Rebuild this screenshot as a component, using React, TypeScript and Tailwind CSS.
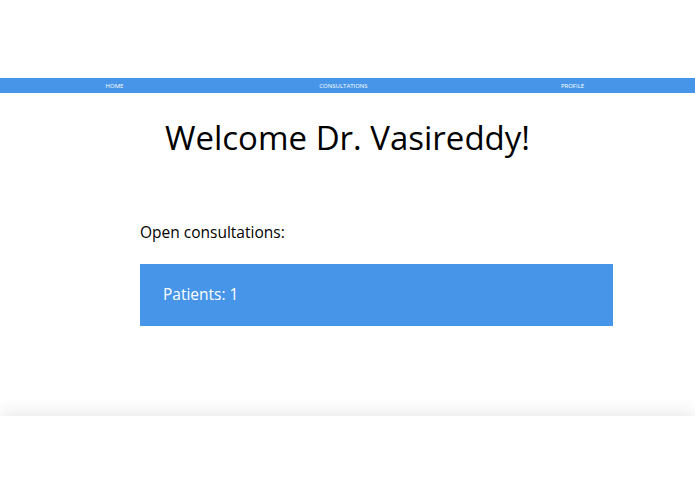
import React from "react";

export default function App() {
  return (
    <div className="w-[695px] h-[494px] bg-white overflow-hidden flex flex-col" style={{ fontFamily: '"Open Sans", sans-serif' }}>
      <div className="h-[78px]" />
      <nav className="h-[15px] bg-[#4695e8] grid grid-cols-3 w-[695px] pr-[8px] items-center text-white text-[6px] leading-none">
        <span className="text-center">HOME</span>
        <span className="text-center">CONSULTATIONS</span>
        <span className="text-center">PROFILE</span>
      </nav>
      <h1 className="mt-[25px] text-center text-[33px] leading-[40px] text-black font-normal">Welcome Dr. Vasireddy!</h1>
      <div className="ml-[140px] w-[473px] mt-[63px]">
        <p className="text-[15.5px] leading-[22px] text-black">Open consultations:</p>
        <div className="mt-[21px] h-[62px] bg-[#4695e8] flex items-center pl-[23px] text-white text-[15.5px]">Patients: 1</div>
      </div>
      <div className="flex-1" />
      <div className="h-[78px] bg-white shadow-[0_-6px_14px_rgba(0,0,0,0.07)] relative z-10" />
    </div>
  );
}
